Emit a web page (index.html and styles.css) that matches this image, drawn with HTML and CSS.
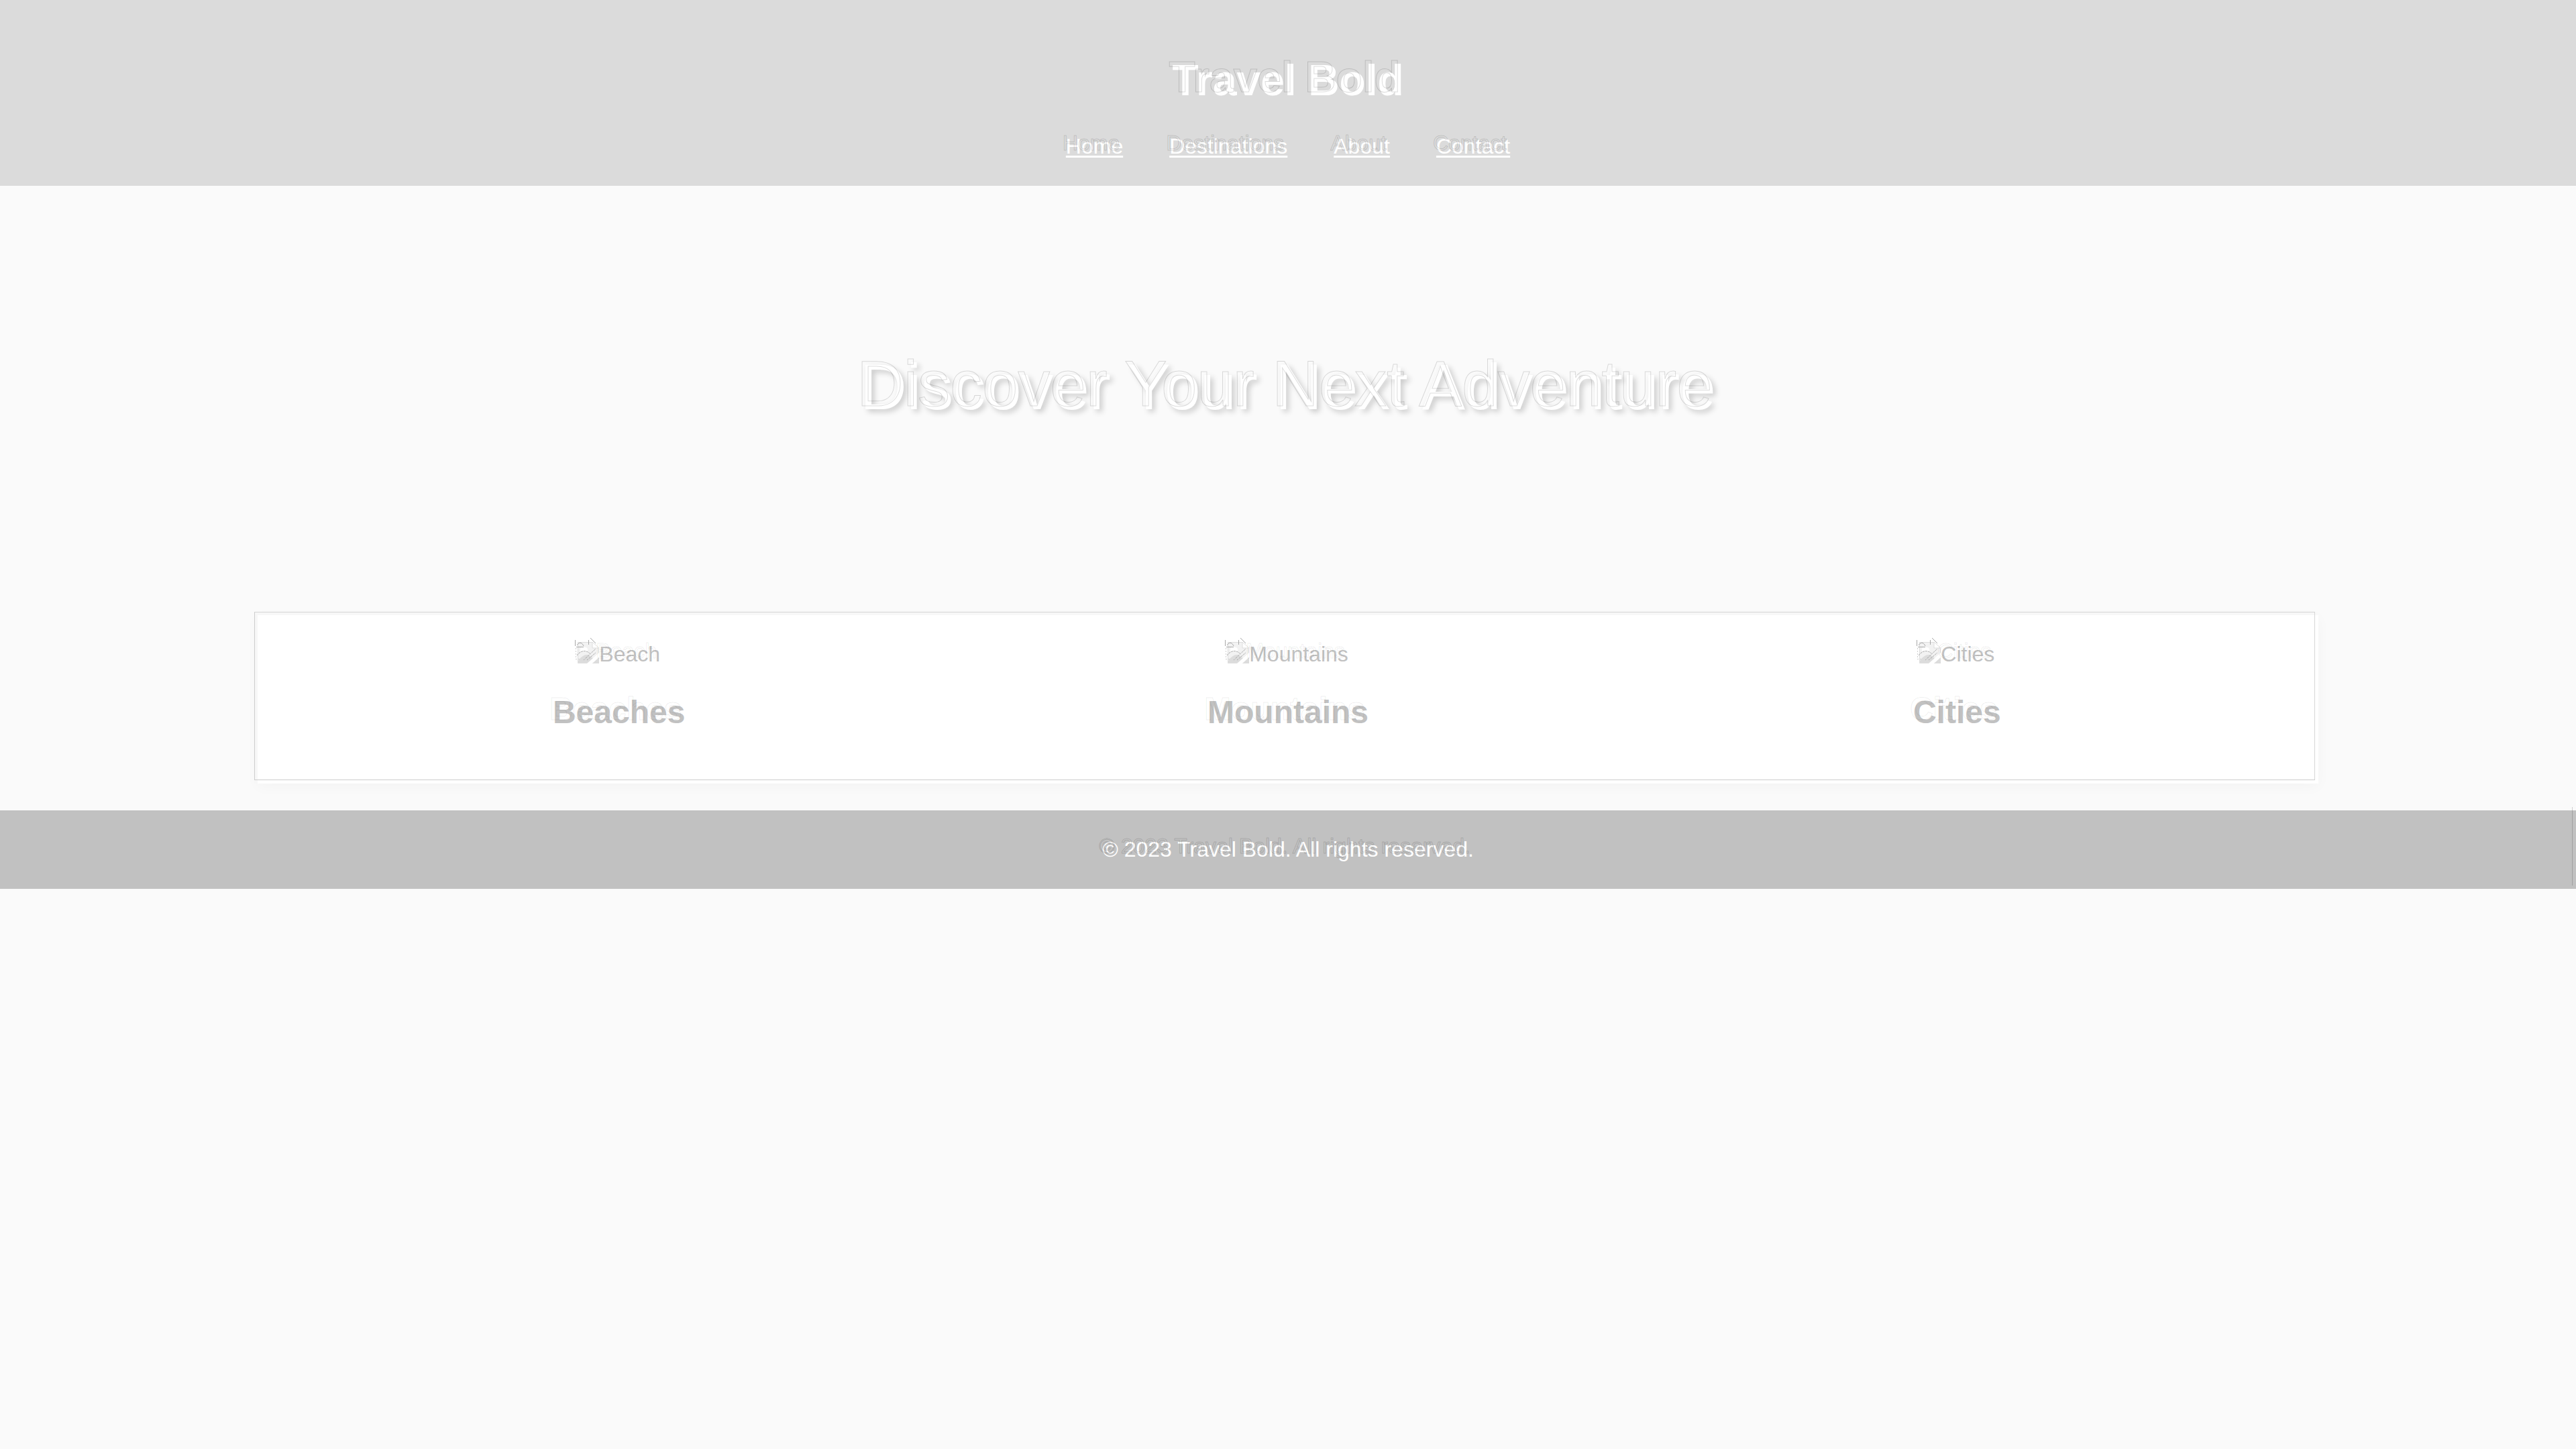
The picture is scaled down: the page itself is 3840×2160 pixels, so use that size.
FILE: index.html
```html
<!DOCTYPE html>
<html lang="en">
<head>
<meta charset="utf-8">
<meta name="viewport" content="width=device-width, initial-scale=1">
<title>Travel Bold</title>
<link rel="stylesheet" href="styles.css">
</head>
<body>
<svg class="defs" aria-hidden="true">
  <symbol id="picture" viewBox="-5 -6 37 38">
    <path d="M0 0H22L32 10V32H0Z" fill="#f2f2f2"/>
    <path d="M.5 .5H22L31.5 10V31.5H.5Z" fill="none" stroke="#dedede"/>
    <path d="M1 31V28C8 18 15 17 20 22L25 26L20 31Z" fill="#dcdcdc"/>
    <path d="M4 12C4 7 8 5 10 8C14 7 16 11 15 14H4Z" fill="#fff"/>
    <path d="M22 0V9H32Z" fill="#fff" stroke="#dedede"/>
    <path d="M14 32L32 16V23L22 32Z" fill="#fff"/>
    <path d="M22 32L32 23V32Z" fill="#dcdcdc"/>
    <g fill="none" stroke="#a8a8a8">
      <path d="M-3.5 -3V6M-2 7.500H9M-1 5C1 1 6 -1 9 6M16.500 -3V4M19 -6L27 2"/>
      <path d="M-1 20C5 12 13 12 18 17M9 27L27 10M14 27L27 16" stroke-dasharray="3 1"/>
      <path d="M-2.500 9V23M-3 25.500H5M10 25.500H16" stroke-dasharray="2 2" stroke="#cfcfcf"/>
    </g>
  </symbol>
</svg>
<header class="header">
  <h1 class="brand etched" data-text="Travel Bold">Travel Bold</h1>
  <nav class="nav">
    <a class="etched" data-text="Home" href="#home">Home</a>
    <a class="etched" data-text="Destinations" href="#destinations">Destinations</a>
    <a class="etched" data-text="About" href="#about">About</a>
    <a class="etched" data-text="Contact" href="#contact">Contact</a>
  </nav>
</header>
<section class="hero">
  <p class="hero-title etched" data-text="Discover Your Next Adventure">Discover Your Next Adventure</p>
</section>
<main class="card">
  <section class="place">
    <div class="picture"><svg class="icon" aria-hidden="true"><use href="#picture"/></svg><span class="etched" data-text="Beach">Beach</span></div>
    <h2 class="place-name etched" data-text="Beaches">Beaches</h2>
  </section>
  <section class="place">
    <div class="picture"><svg class="icon" aria-hidden="true"><use href="#picture"/></svg><span class="etched" data-text="Mountains">Mountains</span></div>
    <h2 class="place-name etched" data-text="Mountains">Mountains</h2>
  </section>
  <section class="place">
    <div class="picture"><svg class="icon" aria-hidden="true"><use href="#picture"/></svg><span class="etched" data-text="Cities">Cities</span></div>
    <h2 class="place-name etched" data-text="Cities">Cities</h2>
  </section>
</main>
<footer class="footer">
  <p class="etched" data-text="© 2023 Travel Bold. All rights reserved.">© 2023 Travel Bold. All rights reserved.</p>
</footer>
</body>
</html>
```
FILE: styles.css
```css
* {
  box-sizing: border-box;
}

body {
  margin: 0;
  background: #fafafa;
  color: #c1c1c1;
  font: 32px/37px "Liberation Sans", Arial, sans-serif;
}

h1, h2, p {
  margin: 0;
}

.defs {
  display: none;
}

/* Thin engraved outline, up and to the left of the lettering */
.etched {
  position: relative;
}

.etched::after {
  content: attr(data-text);
  position: absolute;
  top: -5px;
  left: -5px;
  white-space: nowrap;
  color: transparent;
  text-shadow: none;
  -webkit-text-stroke: 1px rgba(0, 0, 0, 0.14);
  pointer-events: none;
}

.header {
  display: flex;
  flex-direction: column;
  align-items: center;
  gap: 43px;
  padding: 83px 40px 40px;
  background: #dbdbdb;
  color: #fff;
}

.brand {
  font-size: 64px;
  line-height: 74px;
}

.nav {
  display: flex;
  flex-wrap: wrap;
  justify-content: center;
  gap: 0 69px;
}

.nav a {
  color: #fff;
  text-decoration-thickness: 3px;
  text-underline-offset: 3px;
}

.hero {
  display: flex;
  justify-content: center;
  padding: 245px 40px;
}

.hero-title {
  color: #fff;
  font-size: 96px;
  line-height: 110px;
  text-shadow: 4px 4px 8px rgba(0, 0, 0, 0.2);
}

.card {
  position: relative;
  display: flex;
  width: 80%;
  margin: 40px auto;
  padding: 40px;
  background: #fff;
  box-shadow: 0 4px 20px rgba(0, 0, 0, 0.03);
}

.card::after {
  content: "";
  position: absolute;
  inset: -5px 5px 5px -5px;
  border: 1px solid;
  border-color: #d6d6d6 #d6d6d6 #cdcdcd #cdcdcd;
  pointer-events: none;
}

.card::before {
  content: "";
  position: absolute;
  inset: -5px 5px 0 -5px;
  border: solid #f7f7f7;
  border-width: 5px 0 0 5px;
}

.place {
  display: flex;
  flex: 1;
  flex-direction: column;
  align-items: center;
  gap: 40px;
  padding-bottom: 38px;
}

.place .etched::after {
  -webkit-text-stroke-color: rgba(0, 0, 0, 0.08);
}

.picture {
  display: flex;
}

.icon {
  width: 37px;
  height: 38px;
  margin: -6px 0 0 -5px;
}

.place-name {
  font-size: 48px;
  line-height: 56px;
}

.footer {
  position: relative;
  display: flex;
  justify-content: center;
  padding: 40px;
  background: #c1c1c1;
  color: #fff;
}

.footer::after {
  content: "";
  position: absolute;
  inset: -5px 5px 5px auto;
  width: 1px;
  background: rgba(0, 0, 0, 0.17);
}
```
